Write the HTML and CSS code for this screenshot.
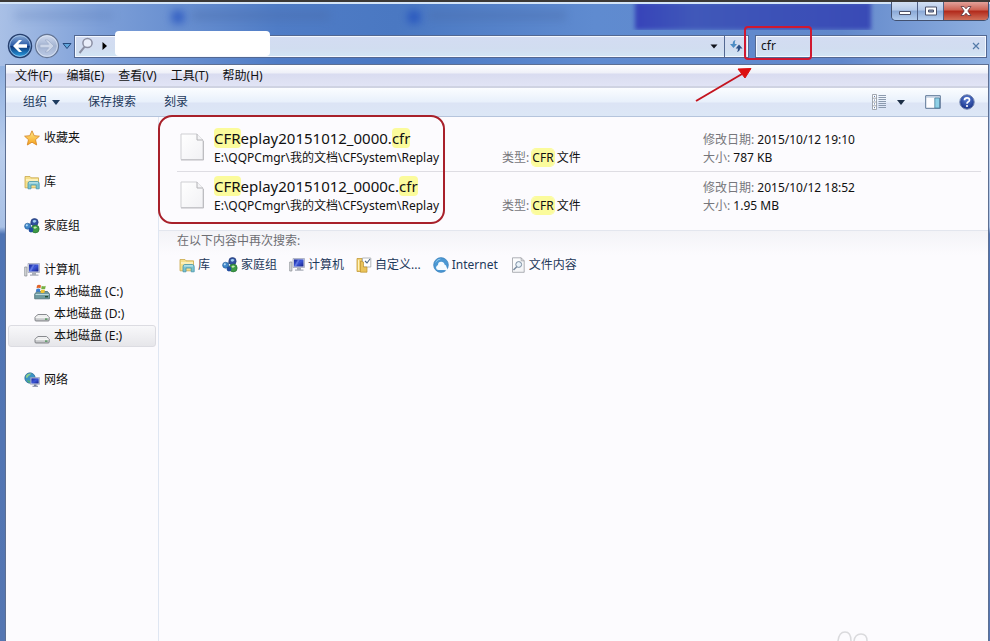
FILE: index.html
```html
<!DOCTYPE html>
<html lang="zh-CN">
<head>
<meta charset="utf-8">
<title>cfr</title>
<link rel="stylesheet" href="styles.css">
</head>
<body>
<svg class="defs" width="0" height="0" aria-hidden="true">
  <defs>
    <linearGradient id="gPaper" x1="0" y1="0" x2="1" y2="1"><stop offset="0" stop-color="#fff"/><stop offset="1" stop-color="#f1f1f4"/></linearGradient>
    <linearGradient id="gStar" x1="0" y1="0" x2="0" y2="1"><stop offset="0" stop-color="#ffe98a"/><stop offset="1" stop-color="#f5a21c"/></linearGradient>
    <linearGradient id="gDrive" x1="0" y1="0" x2="0" y2="1"><stop offset="0" stop-color="#fafafa"/><stop offset="1" stop-color="#b9bbbe"/></linearGradient>
    <linearGradient id="gScreen" x1="0" y1="0" x2="1" y2="1"><stop offset="0" stop-color="#1a2a9c"/><stop offset=".5" stop-color="#3d57d8"/><stop offset="1" stop-color="#14208a"/></linearGradient>
    <linearGradient id="gBack" x1="0" y1="0" x2="0" y2="1"><stop offset="0" stop-color="#8fb0dc"/><stop offset=".48" stop-color="#2b5ba6"/><stop offset=".5" stop-color="#0d3478"/><stop offset="1" stop-color="#2ba5e8"/></linearGradient>
    <linearGradient id="gFwd" x1="0" y1="0" x2="0" y2="1"><stop offset="0" stop-color="#d3ddf0"/><stop offset=".5" stop-color="#a4b4d2"/><stop offset="1" stop-color="#bccbe6"/></linearGradient>
    <radialGradient id="gHelp" cx=".5" cy=".3" r=".7"><stop offset="0" stop-color="#5b80d6"/><stop offset="1" stop-color="#152f86"/></radialGradient>
  </defs>
  <symbol id="i-star" viewBox="0 0 16 16"><path d="M8 .8 10.2 5.7 15.4 6.2 11.5 9.7 12.7 15 8 12.2 3.3 15 4.5 9.7.6 6.2 5.8 5.7z" fill="url(#gStar)" stroke="#d98b2b" stroke-width=".9" stroke-linejoin="round"/></symbol>
  <symbol id="i-lib" viewBox="0 0 16 16"><path d="M1 2.500h5l1 1.300h7.500v10H1z" fill="#f6e08c" stroke="#c9a84c" stroke-width=".8"/><path d="M2 6h12" stroke="#fff7cf" stroke-width="1.400"/><path d="M4 14.800V9.500q0-2 2-2h7q2.200 0 2.200 2v5.300h-3V11H7v3.800z" fill="#7cc4cf" stroke="#4695ad" stroke-width=".8"/><path d="M5 8.900h9" stroke="#d3f0f4" stroke-width="1"/></symbol>
  <symbol id="i-home" viewBox="0 0 16 16"><path d="M4 8l6-4M5 9l7 2" stroke="#5b7fa8" stroke-width="2"/><circle cx="3.600" cy="8.200" r="3" fill="#3f86c9" stroke="#235a96" stroke-width=".6"/><circle cx="10.500" cy="4.200" r="3.700" fill="#31509f" stroke="#20376f" stroke-width=".6"/><path d="M8.500 3q2-2 4 0-1 2-3 1.600z" fill="#a3d0f3"/><circle cx="11.300" cy="11" r="3.900" fill="#3d9a45" stroke="#226b33" stroke-width=".6"/><path d="M9.500 9.500q1.500-2 3.500 0-1 1.500-3 1z" fill="#c3ecae"/><circle cx="7" cy="12" r="2.400" fill="#234da0"/><circle cx="2.800" cy="7.300" r="1.100" fill="#b5dbf5"/></symbol>
  <symbol id="i-pc" viewBox="0 0 16 16"><path d="M.7 5h2.200v9H.7z" fill="#d8dadc" stroke="#85898f" stroke-width=".7"/><path d="M4 1.500h11.500v9H4z" fill="#d9dce6" stroke="#9ba1b6" stroke-width=".7"/><path d="M5 2.400h9.500v7.100H5z" fill="url(#gScreen)"/><path d="M9 2.400h2L7 9.500H5z" fill="#7489e8" opacity=".7"/><path d="M8 10.800h4v1.700h2.500v1.300H6v-1.300h2z" fill="#a8adb8"/></symbol>
  <symbol id="i-drive" viewBox="0 0 16 16"><path d="M1 11 4 8.500h8.500L15.200 11v3q0 1-1 1H2q-1 0-1-1z" fill="url(#gDrive)" stroke="#7a7d82" stroke-width=".9" stroke-linejoin="round"/><path d="M1.500 11.200h13.200" stroke="#fff"/><path d="M11 12.500h2.500v1.200H11z" fill="#3f8a49"/></symbol>
  <symbol id="i-sys" viewBox="0 0 16 16"><path d="M.7 10 3 7.500h10.500l2 2.500v4.800H.7z" fill="#6f9a9f" stroke="#486c73" stroke-width=".8"/><path d="M1.500 10.500h13.300" stroke="#bcd9db"/><path d="M3 1.500q2-1.300 4 0L6.500 4.300q-2-1.200-4 0z" fill="#e0632a"/><path d="M7.700 1.800q2 1 4 0l-.5 3q-2 1-4 0z" fill="#74b043"/><path d="M2.300 5.200q2-1.200 4 0l-.5 3q-2-1.200-4 0z" fill="#3d7fd0"/><path d="M7 5.600q2 1 4 0l-.5 3q-2 1-4 0z" fill="#f2c22f"/><path d="M11 12h3v1.400h-3z" fill="#24523a"/></symbol>
  <symbol id="i-net" viewBox="0 0 16 16"><circle cx="6" cy="6" r="5.200" fill="#3c93c4" stroke="#2b6b94" stroke-width=".7"/><path d="M2.200 3.500q2-2.500 5-2-1 2-2.500 2.200Q4 6 2 6z" fill="#8ed08b"/><path d="M3 8l3 1-.5 2q-2-.5-2.500-3z" fill="#57b072"/><path d="M6.500 5.500h9v6.800h-9z" fill="#dfe3ef" stroke="#8791ad" stroke-width=".6"/><path d="M7.300 6.300h7.400v5.200H7.300z" fill="url(#gScreen)"/><path d="M10 12.500h2.500v1.300H14v1H8.500v-1H10z" fill="#75809c"/></symbol>
  <symbol id="i-custom" viewBox="0 0 16 16"><path d="M1 1.500h5v13H1z" fill="#f2d374" stroke="#c39b38" stroke-width=".8"/><path d="M6.500 1h8.300v9H6.500z" fill="#fff" stroke="#969b9f" stroke-width=".7"/><path d="M9 4l2 2 3-4" fill="none" stroke="#4a6584" stroke-width="1.100"/><path d="M4.500 15.200V4l3 1v5h3.500v5.200z" fill="#eac35a" stroke="#bb902f" stroke-width=".7"/><path d="M2.500 3v10" stroke="#fff3bd"/></symbol>
  <symbol id="i-ie" viewBox="0 0 16 16"><circle cx="8" cy="8" r="7.400" fill="#4c98d3" stroke="#3279b6" stroke-width=".6"/><path d="M2.200 6Q4 1.700 8.200 1.700q-4 1.300-6 4.300z" fill="#a8dcf7"/><path d="M3 10.500q.3-2 2-2.500 0-3.200 3.200-3.200Q11 4.800 11.500 7.500q2 .5 2 2.500l2 4.500-4-1.500H5.500Q3.200 13 3 10.500z" fill="#f6fbff"/></symbol>
  <symbol id="i-content" viewBox="0 0 16 16"><path d="M2.500.8h8.700l3 3v11.500H2.500z" fill="url(#gPaper)" stroke="#9a9da3" stroke-width=".8"/><path d="M11.200.8v3h3" fill="none" stroke="#9a9da3" stroke-width=".8"/><circle cx="8.700" cy="7.500" r="2.900" fill="#eaf3fa" stroke="#788ba0"/><path d="M6.700 9.700 3.500 13" stroke="#788ba0" stroke-width="1.500"/></symbol>
  <symbol id="i-file" viewBox="0 0 24 28"><path d="M1 1h16l6 6v19.500H1z" fill="url(#gPaper)" stroke="#cfcfd3"/><path d="M17 1v6h6" fill="#f3f3f5" stroke="#b2b2b6"/><path d="M1 27h22.500V8" fill="none" stroke="#bdbdc1"/></symbol>
</svg>

<div class="window">
  <header class="chrome">
    <div class="titlebar">
      <div class="glass" aria-hidden="true">
        <span class="smear s1"></span><span class="smear dot d1"></span><span class="smear s2"></span>
        <span class="smear dot d2"></span><span class="smear s3"></span><span class="smear s4"></span>
      </div>
      <div class="caption">
        <button type="button" class="cap" aria-label="最小化"><svg width="12" height="10" viewBox="0 0 12 10"><path d="M.5 5.500h11v3H.5z" fill="#fff" stroke="#4b5068"/></svg></button>
        <button type="button" class="cap" aria-label="最大化"><svg width="12" height="10" viewBox="0 0 12 10"><path d="M.5 1h11v8H.5z" fill="#fff" stroke="#4b5068"/><path d="M3.500 4h5v2h-5z" fill="#8b9fc4" stroke="#4b5068"/></svg></button>
        <button type="button" class="cap close" aria-label="关闭"><svg width="12" height="10" viewBox="0 0 12 10"><path d="M1 .5h3l2 2.300L8 .5h3L7.800 5 11 9.500H8L6 7.200 4 9.500H1L4.200 5z" fill="#fff" stroke="#5a3540" stroke-width=".8"/></svg></button>
      </div>
    </div>
    <div class="navrow">
      <div class="navbtns">
        <button type="button" class="nav" aria-label="后退"><svg width="26" height="26" viewBox="0 0 26 26"><circle cx="13" cy="13" r="11.500" fill="url(#gBack)" stroke="#263f6e" stroke-width="1.500"/><circle cx="13" cy="13" r="10.400" fill="none" stroke="#b8d4f2" stroke-width=".7"/><path d="M6 13l6-6h3l-3.800 4.300H20v3.400h-8.800L15 19h-3z" fill="#fff"/></svg></button>
        <button type="button" class="nav" aria-label="前进"><svg width="26" height="26" viewBox="0 0 26 26"><circle cx="13" cy="13" r="11.500" fill="url(#gFwd)" stroke="#657695" stroke-width="1.300"/><circle cx="13" cy="13" r="10.400" fill="none" stroke="#e4ecf9" stroke-width=".7"/><path d="M20 13l-6-6h-3l3.800 4.300H6v3.400h8.800L11 19h3z" fill="#ccd6e8" stroke="#93a3c2" stroke-width=".5"/></svg></button>
        <button type="button" class="nav" aria-label="最近浏览的位置"><svg width="10" height="8" viewBox="0 0 10 8"><path d="M1 1.500h8L5 6.500z" fill="#5fa5dc" stroke="#24497c"/></svg></button>
      </div>
      <div class="address">
        <svg width="16" height="18" viewBox="0 0 16 18"><circle cx="9.500" cy="6" r="4.600" fill="#e9eefa" stroke="#8b8fa3" stroke-width="1.500"/><path d="M6.500 9.800 1.500 16" stroke="#8b8fa3" stroke-width="2"/></svg>
        <svg width="5" height="8" viewBox="0 0 5 8"><path d="M.5 0 5 4 .5 8z" fill="#000"/></svg>
        <span class="blank"></span>
        <button type="button" class="drop" aria-label="以前的位置"><svg width="8" height="5" viewBox="0 0 8 5"><path d="M.5.500h7L4 4.500z" fill="#10131c"/></svg></button>
        <button type="button" class="refresh" aria-label="刷新"><svg width="14" height="14" viewBox="0 0 14 14"><path d="M6.500 1Q3.700 1.500 3.700 5H1l3.500 4L8 5H5.800q-.2-2.500.7-4z" fill="#4c8cc4"/><path d="M8 13q3-.7 3-3.500h2.500L10 5.500l-3.300 4h2.200q.2 2-.9 3.500z" fill="#2c4f86"/></svg></button>
      </div>
      <div class="search">
        <input type="text" aria-label="搜索" value="cfr">
        <button type="button" aria-label="清除"><svg width="8" height="8" viewBox="0 0 8 8"><path d="M1 1l6 6M7 1 1 7" stroke="#537aa8" stroke-width="1.200"/></svg></button>
      </div>
    </div>
  </header>

  <div class="client">
    <nav class="menubar">
      <button type="button">文件(F)</button><button type="button">编辑(E)</button><button type="button">查看(V)</button><button type="button">工具(T)</button><button type="button">帮助(H)</button>
    </nav>
    <div class="toolbar">
      <button type="button">组织<svg width="8" height="5" viewBox="0 0 8 5"><path d="M0 0h8L4 5z" fill="#1c3a5e"/></svg></button>
      <button type="button">保存搜索</button>
      <button type="button">刻录</button>
      <div class="tools">
        <button type="button" aria-label="更改视图"><svg width="14" height="16" viewBox="0 0 14 16"><path d="M.5.500h4v15h-4zM.5 4.200h4M.5 8h4M.5 11.800h4" fill="#fff" stroke="#8d949e" stroke-width=".8"/><path d="M2 2.400h1M2 6.100h1M2 9.900h1M2 13.700h1" stroke="#4b6ca0"/><path d="M6.500 1.500H14M6.500 3.500H14M6.500 5.500H14M6.500 7.500H14M6.500 9.500H14M6.500 11.500H14M6.500 13.500H14" stroke="#8090a5" stroke-width=".9"/></svg></button>
        <button type="button" aria-label="更多选项"><svg width="8" height="5" viewBox="0 0 8 5"><path d="M0 0h8L4 5z" fill="#1c2e46"/></svg></button>
        <button type="button" aria-label="预览窗格"><svg width="16" height="14" viewBox="0 0 16 14"><path d="M.7.700h14.600v12.600H.7z" fill="#fdfdff" stroke="#5a7494"/><path d="M1 2h14" stroke="#a6bbd4"/><path d="M9.800 3h4.700v10H9.800z" fill="#8fd0e6" stroke="#4a7f9d" stroke-width=".8"/></svg></button>
        <button type="button" aria-label="获取帮助"><svg width="16" height="16" viewBox="0 0 16 16"><circle cx="8" cy="8" r="7.200" fill="url(#gHelp)" stroke="#6f82ad"/><path d="M5.500 6.200Q5.500 3.800 8 3.800t2.500 2.100Q10.500 7.200 9 8 8 8.600 8 9.800" fill="none" stroke="#fff" stroke-width="1.700"/><circle cx="8" cy="12" r="1.100" fill="#fff"/></svg></button>
      </div>
    </div>

    <div class="body">
      <aside class="side">
        <ul><li><a href="#"><svg><use href="#i-star"/></svg>收藏夹</a></li></ul>
        <ul><li><a href="#"><svg><use href="#i-lib"/></svg>库</a></li></ul>
        <ul><li><a href="#"><svg><use href="#i-home"/></svg>家庭组</a></li></ul>
        <ul>
          <li><a href="#"><svg><use href="#i-pc"/></svg>计算机</a></li>
          <li><a href="#" class="sub"><svg><use href="#i-sys"/></svg>本地磁盘 (C:)</a></li>
          <li><a href="#" class="sub"><svg><use href="#i-drive"/></svg>本地磁盘 (D:)</a></li>
          <li><a href="#" class="sub on"><svg><use href="#i-drive"/></svg>本地磁盘 (E:)</a></li>
        </ul>
        <ul><li><a href="#"><svg><use href="#i-net"/></svg>网络</a></li></ul>
      </aside>

      <main class="main">
        <section class="results">
          <article class="item">
            <svg class="file"><use href="#i-file"/></svg>
            <div class="name"><h2><mark>CFR</mark>eplay20151012_0000.<mark>cfr</mark></h2><p>E:\QQPCmgr\我的文档\CFSystem\Replay</p></div>
            <p class="type"><span class="key">类型:</span> <mark>CFR</mark> 文件</p>
            <div class="meta"><p><span class="key">修改日期:</span> 2015/10/12 19:10</p><p><span class="key">大小:</span> 787 KB</p></div>
          </article>
          <article class="item">
            <svg class="file"><use href="#i-file"/></svg>
            <div class="name"><h2><mark>CFR</mark>eplay20151012_0000c.<mark>cfr</mark></h2><p>E:\QQPCmgr\我的文档\CFSystem\Replay</p></div>
            <p class="type"><span class="key">类型:</span> <mark>CFR</mark> 文件</p>
            <div class="meta"><p><span class="key">修改日期:</span> 2015/10/12 18:52</p><p><span class="key">大小:</span> 1.95 MB</p></div>
          </article>
        </section>
        <section class="again">
          <p>在以下内容中再次搜索:</p>
          <div class="links">
            <a href="#"><svg><use href="#i-lib"/></svg>库</a>
            <a href="#"><svg><use href="#i-home"/></svg>家庭组</a>
            <a href="#"><svg><use href="#i-pc"/></svg>计算机</a>
            <a href="#"><svg><use href="#i-custom"/></svg>自定义...</a>
            <a href="#"><svg><use href="#i-ie"/></svg>Internet</a>
            <a href="#"><svg><use href="#i-content"/></svg>文件内容</a>
          </div>
        </section>
        <span class="ring-results"></span>
        <svg class="watermark" width="34" height="10" viewBox="0 0 34 10"><path d="M2 10Q3 1 9 1t6 9M18 10q1-7 7-7t6 7" fill="none" stroke="#dadadd" stroke-width="1.500"/></svg>
      </main>
    </div>
  </div>
  <span class="ring-search"></span>
  <svg class="arrow" width="60" height="38" viewBox="0 0 60 38"><path d="M2 36 48 9" stroke="#c4141f" stroke-width="2"/><path d="M44 4 57 3.500 51 13z" fill="#dc1010" stroke="#dc1010" stroke-linejoin="round"/></svg>
</div>
</body>
</html>
```
FILE: styles.css
```css
* { box-sizing: border-box; }
body {
  margin: 0;
  font: 12px/18px "Noto Sans", "Noto Sans CJK SC", sans-serif;
  color: #111;
}
h2, p, ul { margin: 0; padding: 0; font-weight: normal; }
ul { list-style: none; }
a { color: inherit; text-decoration: none; }
button { border: 0; padding: 0; background: none; font: inherit; color: inherit; display: flex; align-items: center; }
svg { display: block; flex: none; }
.defs { position: absolute; }

.window {
  position: relative;
  display: flex;
  flex-direction: column;
  min-height: 100vh;
  padding: 0 1px 0 5px;
  overflow: hidden;
  border-top: 2px solid #3c3936;
  background:
    linear-gradient(#d4e5f8, #d4e5f8) 0 0 / 100% 2px no-repeat,
    linear-gradient(90deg, #a9c0e6 0, #7d9fd8 10%, #4f7cc6 28%, #4a78c2 40%, #5f8bd0 60%, #6288cb 85%, #8fb0e0 100%) 0 0 / 100% 64px no-repeat,
    linear-gradient(#8fb0e0 60px, #b9cdec 150px, #a9c1e6 225px, #4f74b4 232px, #5576b2 100%);
}

/* Window frame */
.chrome { padding-bottom: 2px; }
.titlebar { display: flex; justify-content: flex-end; height: 28px; position: relative; }
.glass { position: absolute; inset: 2px 0 0; overflow: hidden; }
.smear { position: absolute; top: 7px; height: 9px; filter: blur(4px); background: #4a6ba8; opacity: .4; }
.s1 { left: 1%; width: 10%; opacity: .2; }
.s2 { left: 19%; width: 14%; }
.s3 { left: 43%; width: 14%; }
.dot { width: 12px; height: 12px; background: #1746bd; opacity: .7; filter: blur(4px); }
.d1 { left: 17%; }
.d2 { left: 41%; }
.s4 { left: 64%; width: 24%; top: -2px; height: 28px; background: linear-gradient(90deg, #3540b8, #3f56b8 25%, #3747b5); opacity: .95; filter: blur(2px); }
.caption { position: relative; display: flex; height: 19px; border: 1px solid #41506f; border-top: 0; border-radius: 0 0 5px 5px; overflow: hidden; }
.cap { justify-content: center; width: 26px; border-right: 1px solid #4f6085; background: linear-gradient(#d3e0f3, #b3c8e8 45%, #8aa8d6 50%, #b4cdee); }
.close { width: 44px; border-right: 0; background: linear-gradient(#e2a29b, #cc6152 45%, #b1281a 50%, #d0705a); }

.navrow { display: flex; align-items: center; height: 32px; padding: 0 2px; }
.navbtns { display: flex; align-items: center; gap: 1px; width: 67px; flex: none; }
.nav:last-child { margin-left: 1px; }
.address, .search {
  display: flex;
  align-items: center;
  height: 23px;
  border: 1px solid #536892;
  box-shadow: inset 0 0 0 1px #f4f8ff;
  background: linear-gradient(#d3dcf2, #d1ddf0 60%, #d2e6f5);
}
.address { flex: 1; min-width: 0; gap: 8px; padding-left: 3px; }
.blank { width: 155px; height: 25px; margin-bottom: 6px; border-radius: 4px; background: #fff; }
.drop { margin-left: auto; }
.drop, .refresh { height: 100%; }
.refresh { width: 24px; margin-left: -2px; padding-left: 4px; border-left: 1px solid #536892; }
.search { flex: 0 0 232px; margin-left: 6px; padding: 0 6px 0 5px; }
.search input { flex: 1; min-width: 0; padding: 0; border: 0; outline: 0; background: none; font: inherit; color: #111; }

/* Client area */
.client { flex: 1; display: flex; flex-direction: column; border: 1px solid #5d6f92; border-bottom: 0; background: #fcfbfe; }
.menubar { display: flex; gap: 14px; height: 23px; padding: 0 9px; background: linear-gradient(#fff, #eef0f8 8px, #d9dcf0 9px, #e1e4f5); border-bottom: 2px solid #cfd3e2; }
.toolbar { display: flex; gap: 28px; height: 29px; padding: 0 13px 0 17px; color: #1e395b; background: linear-gradient(#fbfdff, #e8f0fb 14px, #dce4f5 15px, #dce7f6); border-bottom: 1px solid #b5c4dc; }
.toolbar > button:first-child { gap: 5px; }
.tools { display: flex; margin-left: auto; align-items: center; }
.tools button:nth-child(2) { margin: 0 20px 0 11px; }
.tools button:nth-child(4) { margin-left: 18px; }

.body { flex: 1; display: flex; }
.side { width: 153px; flex: none; display: flex; flex-direction: column; gap: 22px; padding: 10px 2px 0; border-right: 1px solid #dfe6f2; }
.side a { display: flex; align-items: center; gap: 4px; height: 22px; padding-left: 15px; border: 1px solid transparent; border-radius: 3px; }
.side svg, .links svg { width: 16px; height: 16px; }
.side .sub { padding-left: 25px; }
.side .on { border-color: #dcdce2; background: linear-gradient(#f8f8fa, #e6e6ea); }

.main { position: relative; flex: 1; min-width: 0; }
.results { padding: 6px 7px 11px 18px; border-bottom: 1px solid #e3e6ee; }
.item { display: grid; grid-template-columns: 34px 288fr 201fr 278fr; height: 48px; padding: 4px 0 0 3px; }
.item + .item { padding-top: 3px; border-top: 1px solid #dedde3; }
.file { width: 24px; height: 28px; margin-top: 6px; }
.item h2 { font-size: 15px; line-height: 22px; }
.item p { white-space: nowrap; }
.item .type { padding-top: 22px; }
.meta { padding-top: 4px; }
.key { color: #77777c; }
mark { color: inherit; background: #fbfb9c; border-radius: 4px; box-shadow: 0 0 0 1px #fbfb9c; }
h2 mark { box-shadow: none; }

.again { padding: 1px 0 20px 18px; background: linear-gradient(#f3f3f7, #fcfbfe 24px); color: #6d6d72; }
.links { display: flex; gap: 12px; padding: 6px 0 0 2px; color: #1e395b; }
.links a { display: flex; align-items: center; gap: 3px; }

/* Hand-drawn marks over the window */
.ring-results { position: absolute; left: -1px; top: -2px; width: 287px; height: 109px; border: 2px solid #a8202a; border-radius: 14px; }
.ring-search { position: absolute; left: 744px; top: 24px; width: 68px; height: 34px; border: 2px solid #d01830; border-radius: 4px; }
.arrow { position: absolute; left: 694px; top: 63px; }
.watermark { position: absolute; right: 118px; bottom: 0; }
```
